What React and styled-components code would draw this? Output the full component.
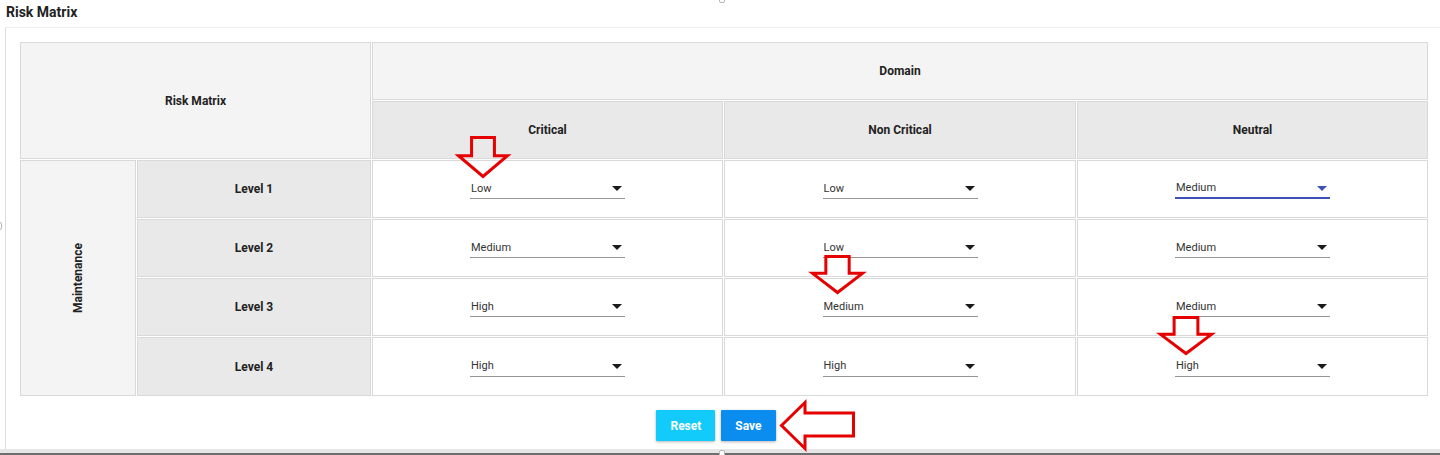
import React from "react";
import styled, { createGlobalStyle } from "styled-components";

const GlobalStyle = createGlobalStyle`
  html, body {
    margin: 0;
    padding: 0;
    background: #fff;
    font-family: Roboto, "Liberation Sans", Arial, sans-serif;
    color: #222;
  }
`;

const domains = ["Critical", "Non Critical", "Neutral"];

const rows = [
  { level: "Level 1", values: ["Low", "Low", "Medium"], focused: 2 },
  { level: "Level 2", values: ["Medium", "Low", "Medium"] },
  { level: "Level 3", values: ["High", "Medium", "Medium"] },
  { level: "Level 4", values: ["High", "High", "High"] },
];

const Page = styled.div`
  position: relative;
  width: 1440px;
  height: 455px;
  overflow: hidden;
`;

const Title = styled.h2`
  margin: 0;
  height: 27px;
  box-sizing: border-box;
  padding: 2px 0 0 6px;
  font-size: 14px;
  line-height: 20px;
  font-weight: 700;
  color: #222;
`;

const Card = styled.section`
  margin-left: 5px;
  height: 422px;
  box-sizing: border-box;
  border-left: 1px solid #dcdcdc;
  border-top: 1px solid #eeeeee;
  padding: 13px 0 8px 13px;
`;

const Matrix = styled.table`
  border-collapse: separate;
  border-spacing: 1px;
  table-layout: fixed;
  width: 1410px;
`;

const Cell = styled.td`
  box-sizing: border-box;
  height: ${(p) => (p.$tall ? "59px" : "58px")};
  padding: 0;
  border: 1px solid #d9d9d9;
  background: ${(p) => (p.$tone === "light" ? "#f4f4f4" : p.$tone === "dark" ? "#e9e9e9" : "#fff")};
  text-align: center;
  vertical-align: middle;
  font-size: 12px;
  font-weight: ${(p) => (p.$tone ? 700 : 400)};
  color: #222;
`;

const Vertical = styled.div`
  transform: rotate(-90deg);
  white-space: nowrap;
  font-size: 12px;
  font-weight: 700;
`;

const SelectBox = styled.div`
  width: 155px;
  height: 20px;
  margin: 0 auto;
  box-sizing: border-box;
  display: flex;
  align-items: center;
  justify-content: space-between;
  padding: 0 3px 0 1px;
  border-bottom: ${(p) => (p.$focused ? "2px solid #3f51b5" : "1px solid #949494")};
  font-size: 11px;
  line-height: 20px;
  color: #333;
  text-align: left;
`;

const ButtonRow = styled.div`
  display: flex;
  justify-content: center;
  gap: 6px;
  margin-top: 13px;
  padding-right: 27px;
`;

const Button = styled.button`
  height: 31px;
  padding: 0 14px;
  border: none;
  border-radius: 1px;
  background: ${(p) => (p.$primary ? "#0b8cef" : "#13cbfb")};
  color: #fff;
  font-family: Roboto, "Liberation Sans", Arial, sans-serif;
  font-size: 12px;
  font-weight: 700;
  box-shadow: 0 1px 3px rgba(0, 0, 0, 0.3);
  cursor: pointer;
`;

const BottomBar = styled.div`
  position: absolute;
  left: 0;
  right: 0;
  bottom: 0;
  height: 6px;
  background: #e6e6e6;
  border-bottom: 2px solid #6e6e6e;
  box-sizing: border-box;
`;

const Handle = styled.div`
  position: absolute;
  width: ${(p) => p.$w}px;
  height: ${(p) => p.$h}px;
  left: ${(p) => p.$x}px;
  top: ${(p) => p.$y}px;
  border: 1px solid #b5b5b5;
  border-radius: 2px;
  background: #fff;
  box-sizing: border-box;
`;

const Overlay = styled.svg`
  position: absolute;
  overflow: visible;
  pointer-events: none;
`;

const Caret = ({ color }) => (
  <svg width="10" height="5" viewBox="0 0 10 5">
    <path d="M0 0 L10 0 L5 5 Z" fill={color} />
  </svg>
);

const Select = ({ value, focused }) => (
  <SelectBox $focused={focused}>
    <span>{value}</span>
    <Caret color={focused ? "#3f51b5" : "#1a1a1a"} />
  </SelectBox>
);

const DownArrow = ({ x, y, w, h }) => {
  const s = 1.5;
  const sl = w * 0.28;
  const sr = w * 0.72;
  const hy = h * 0.47;
  const pts = [
    [sl, s], [sr, s], [sr, hy], [w - s, hy], [w / 2, h - s], [s, hy], [sl, hy],
  ].map((p) => p.join(",")).join(" ");
  return (
    <Overlay style={{ left: x, top: y }} width={w} height={h} viewBox={`0 0 ${w} ${h}`}>
      <polygon points={pts} fill="none" stroke="#e60000" strokeWidth="3" strokeLinejoin="miter" />
    </Overlay>
  );
};

const LeftArrow = ({ x, y }) => (
  <Overlay style={{ left: x, top: y }} width="75" height="49" viewBox="0 0 75 49">
    <polygon
      points="1.5,24.5 25,1.5 25,12 73.5,12 73.5,35 25,35 25,47.5"
      fill="none"
      stroke="#e60000"
      strokeWidth="3"
    />
  </Overlay>
);

export default function App() {
  return (
    <Page>
      <GlobalStyle />
      <Title>Risk Matrix</Title>
      <Card>
        <Matrix>
          <colgroup>
            <col style={{ width: 116 }} />
            <col style={{ width: 234 }} />
            <col style={{ width: 351 }} />
            <col style={{ width: 352 }} />
            <col style={{ width: 351 }} />
          </colgroup>
          <thead>
            <tr>
              <Cell as="th" $tone="light" colSpan={2} rowSpan={2}>
                Risk Matrix
              </Cell>
              <Cell as="th" $tone="light" colSpan={3}>
                Domain
              </Cell>
            </tr>
            <tr>
              {domains.map((d) => (
                <Cell as="th" $tone="dark" key={d}>
                  {d}
                </Cell>
              ))}
            </tr>
          </thead>
          <tbody>
            {rows.map((r, i) => (
              <tr key={r.level}>
                {i === 0 && (
                  <Cell as="th" $tone="light" rowSpan={4}>
                    <Vertical>Maintenance</Vertical>
                  </Cell>
                )}
                <Cell as="th" $tone="dark" $tall={i === 3}>
                  {r.level}
                </Cell>
                {r.values.map((v, j) => (
                  <Cell key={j} $tall={i === 3}>
                    <Select value={v} focused={r.focused === j} />
                  </Cell>
                ))}
              </tr>
            ))}
          </tbody>
        </Matrix>
        <ButtonRow>
          <Button>Reset</Button>
          <Button $primary>Save</Button>
        </ButtonRow>
      </Card>

      <Handle $x={719} $y={-3} $w={6} $h={6} />
      <Handle $x={-3} $y={222} $w={5} $h={8} />
      <BottomBar />
      <Handle $x={719} $y={450} $w={6} $h={8} />

      <DownArrow x={457} y={136} w={52} h={42} />
      <DownArrow x={811} y={255} w={53} h={39} />
      <DownArrow x={1159} y={316} w={54} h={39} />
      <LeftArrow x={780} y={401} />
    </Page>
  );
}
